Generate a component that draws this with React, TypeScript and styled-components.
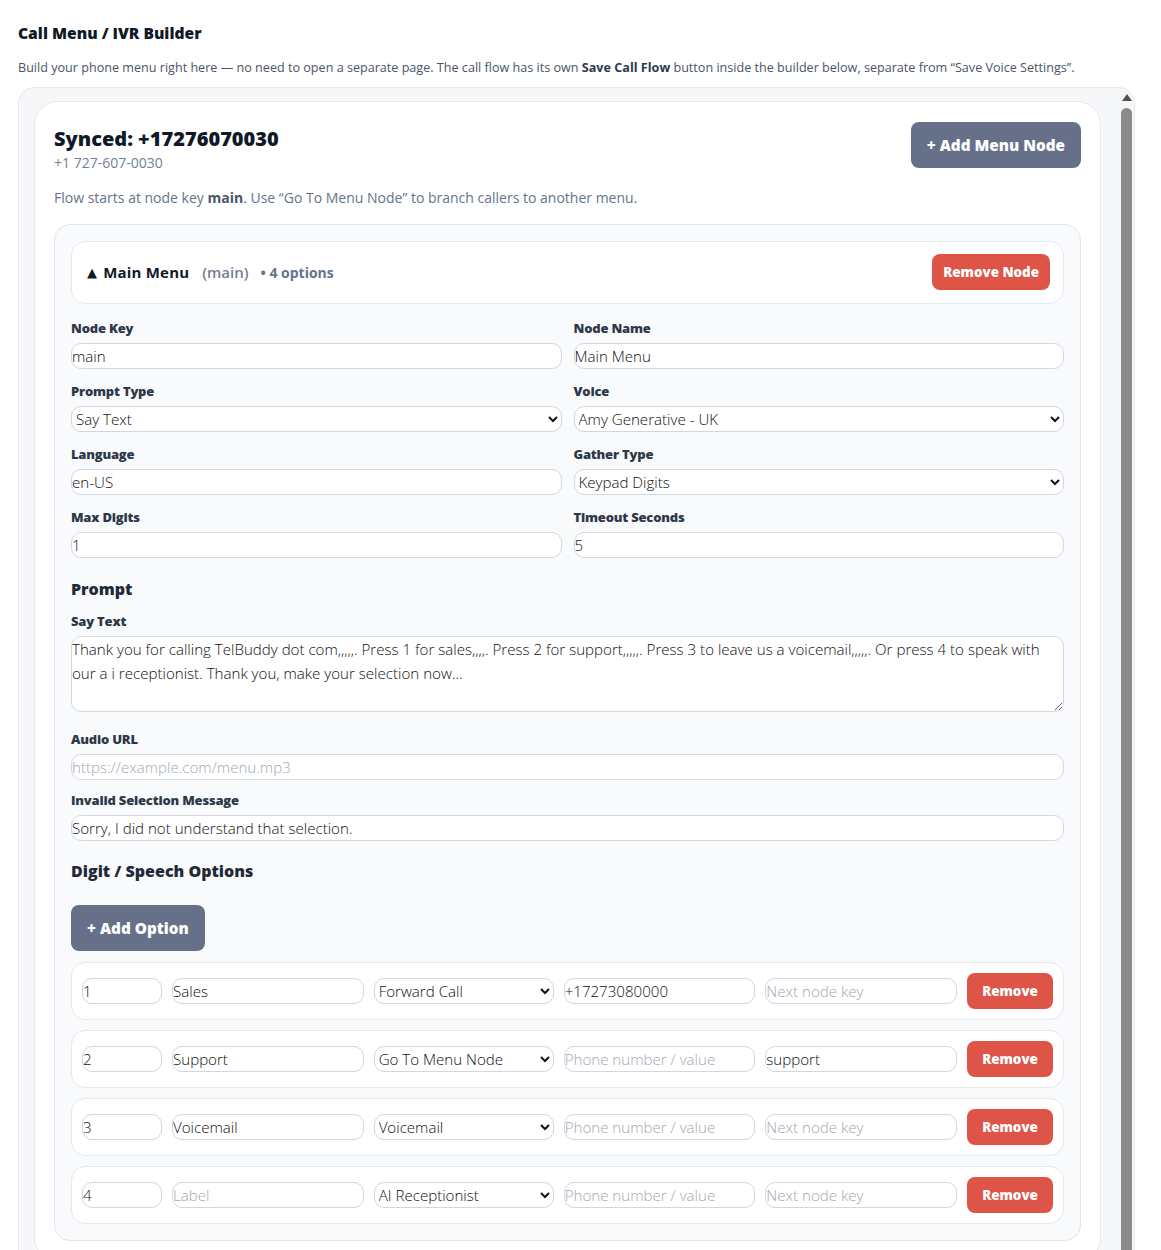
import { FC } from "react";
import styled, { createGlobalStyle } from "styled-components";

const GlobalStyle = createGlobalStyle`
  * { box-sizing: border-box; }
  html, body {
    margin: 0;
    height: 100%;
    overflow: hidden;
    background: #ffffff;
  }
  body {
    font-family: "Open Sans", "Noto Sans", sans-serif;
    color: #1a202c;
  }
`;

const SPage = styled.div`
  padding: 22px 26px 0 18px;
`;

const STitle = styled.h2`
  margin: 0;
  font-size: 15.6px;
  line-height: 22px;
  font-weight: 800;
  color: #111827;
`;

const SIntro = styled.p`
  margin: 15px 0 10px;
  font-size: 12.6px;
  line-height: 18px;
  color: #4a5568;
  b {
    color: #2d3a4f;
    font-weight: 700;
  }
`;

const SScroller = styled.div`
  display: flex;
  height: 1180px;
  background: #f6f7f9;
  border: 1px solid #e6e9ef;
  border-radius: 16px;
  overflow: hidden;
`;

const SScrollArea = styled.div`
  flex: 1;
  min-width: 0;
  overflow: hidden;
  padding: 13px 18px 16px 15px;
`;

const SRail = styled.div`
  flex: none;
  width: 15px;
  display: flex;
  flex-direction: column;
  align-items: center;
  gap: 7px;
  padding-top: 6px;
`;

const SRailArrow = styled.div`
  width: 0;
  height: 0;
  border-left: 5px solid transparent;
  border-right: 5px solid transparent;
  border-bottom: 7px solid #505050;
`;

const SRailThumb = styled.div`
  flex: 1;
  width: 11px;
  border-radius: 6px;
  background: #8b8b8b;
`;

const SCard = styled.div`
  background: #ffffff;
  border: 1px solid #e5e8ee;
  border-radius: 24px;
  padding: 20px 19px 20px 19px;
`;

const SCardHead = styled.div`
  display: flex;
  justify-content: space-between;
  align-items: flex-start;
`;

const SSynced = styled.div`
  margin-top: 5px;
  font-size: 20px;
  line-height: 24px;
  font-weight: 800;
  color: #111827;
`;

const SPhone = styled.div`
  margin-top: 2px;
  font-size: 14px;
  line-height: 20px;
  color: #718096;
`;

const SButton = styled.button<{ $tone?: "slate" | "red"; $size?: "lg" | "sm" }>`
  border: none;
  border-radius: 8px;
  font-family: inherit;
  font-weight: 800;
  color: #ffffff;
  cursor: pointer;
  white-space: nowrap;
  background: ${(p) => (p.$tone === "red" ? "#de5447" : "#667189")};
  height: ${(p) => (p.$size === "sm" ? "36px" : "46px")};
  padding: ${(p) => (p.$size === "sm" ? "0 11px" : "0 16px")};
  font-size: ${(p) => (p.$size === "sm" ? "13.4px" : "15.3px")};
`;

const SFlowNote = styled.p`
  margin: 15px 0 16px;
  font-size: 14px;
  line-height: 20px;
  color: #64748b;
  b {
    color: #4a5568;
    font-weight: 700;
  }
`;

const SNode = styled.div`
  background: #f8fafc;
  border: 1px solid #dfe7f3;
  border-radius: 16px;
  padding: 16px;
`;

const SNodeHead = styled.div`
  display: flex;
  align-items: center;
  gap: 12px;
  background: #ffffff;
  border: 1px solid #e2e9f3;
  border-radius: 14px;
  padding: 12px 13px 13px 15px;
`;

const SNodeName = styled.span`
  display: flex;
  align-items: center;
  font-size: 15px;
  font-weight: 700;
  letter-spacing: 0.2px;
  color: #111827;
`;

const SCaret = styled.span`
  font-family: "DejaVu Sans", sans-serif;
  font-size: 13px;
  margin-right: 6px;
`;

const SNodeKey = styled.span`
  margin-left: 1px;
  font-size: 15px;
  font-weight: 600;
  color: #718096;
`;

const SNodeCount = styled.span`
  font-size: 14px;
  font-weight: 700;
  color: #64748b;
  flex: 1;
`;

const SGrid = styled.div`
  display: grid;
  grid-template-columns: 1fr 1fr;
  column-gap: 12px;
  row-gap: 14px;
  margin-top: 16px;
`;

const SField = styled.label<{ $gap?: number }>`
  display: flex;
  flex-direction: column;
  gap: 7px;
  margin-bottom: ${(p) => p.$gap ?? 0}px;
`;

const SLabel = styled.span`
  font-size: 13px;
  line-height: 16px;
  font-weight: 800;
  color: #2d3748;
  letter-spacing: -0.2px;
`;

const SInput = styled.input`
  width: 100%;
  height: 26px;
  padding: 0;
  border: 1px solid #cfd7e3;
  border-radius: 10px;
  background: #ffffff;
  font-family: "Open Sans", sans-serif;
  font-size: 15.1px;
  font-weight: 300;
  color: #111111;
  &::placeholder {
    color: #a3a8b1;
  }
`;

const SSelect = styled.select`
  width: 100%;
  height: 26px;
  border: 1px solid #cfd7e3;
  border-radius: 10px;
  background: #ffffff;
  font-family: "Open Sans", sans-serif;
  font-size: 15.1px;
  font-weight: 300;
  color: #111111;
`;

const STextArea = styled.textarea`
  display: block;
  width: 100%;
  height: 76px;
  padding: 0;
  border: 1px solid #cfd7e3;
  border-radius: 10px;
  background: #ffffff;
  font-family: "Open Sans", sans-serif;
  font-size: 15.1px;
  font-weight: 300;
  line-height: 24px;
  color: #111111;
  resize: vertical;
`;

const SSection = styled.h3<{ $top: number; $bottom: number }>`
  margin: ${(p) => p.$top}px 0 ${(p) => p.$bottom}px;
  font-size: 16px;
  line-height: 20px;
  font-weight: 800;
  color: #1f2937;
`;

const SOptions = styled.div`
  display: flex;
  flex-direction: column;
  gap: 10px;
  margin-top: 11px;
`;

const SOptionRow = styled.div`
  display: grid;
  grid-template-columns: 80px 1fr 180px 1fr 1fr 86px;
  gap: 10px;
  align-items: center;
  background: #ffffff;
  border: 1px solid #e2e8f0;
  border-radius: 14px;
  padding: 10px;
`;

type Option = {
  digit: string;
  label: string;
  action: string;
  value: string;
  next: string;
};

const options: Option[] = [
  { digit: "1", label: "Sales", action: "Forward Call", value: "+17273080000", next: "" },
  { digit: "2", label: "Support", action: "Go To Menu Node", value: "", next: "support" },
  { digit: "3", label: "Voicemail", action: "Voicemail", value: "", next: "" },
  { digit: "4", label: "", action: "AI Receptionist", value: "", next: "" },
];

const actions = ["Forward Call", "Go To Menu Node", "Voicemail", "AI Receptionist", "Hang Up"];

const sayText =
  "Thank you for calling TelBuddy dot com,,,,,. Press 1 for sales,,,,. Press 2 for support,,,,,. Press 3 to leave us a voicemail,,,,,. Or press 4 to speak with our a i receptionist. Thank you, make your selection now...";

const OptionRow: FC<{ option: Option }> = ({ option }) => (
  <SOptionRow>
    <SInput defaultValue={option.digit} />
    <SInput defaultValue={option.label} placeholder="Label" />
    <SSelect defaultValue={option.action}>
      {actions.map((a) => (
        <option key={a}>{a}</option>
      ))}
    </SSelect>
    <SInput defaultValue={option.value} placeholder="Phone number / value" />
    <SInput defaultValue={option.next} placeholder="Next node key" />
    <SButton $tone="red" $size="sm">
      Remove
    </SButton>
  </SOptionRow>
);

export default function App() {
  return (
    <>
      <GlobalStyle />
      <SPage>
        <STitle>Call Menu / IVR Builder</STitle>
        <SIntro>
          Build your phone menu right here — no need to open a separate page. The call flow has its own{" "}
          <b>Save Call Flow</b> button inside the builder below, separate from “Save Voice Settings”.
        </SIntro>
        <SScroller>
          <SScrollArea>
            <SCard>
              <SCardHead>
                <div>
                  <SSynced>Synced: +17276070030</SSynced>
                  <SPhone>+1 727-607-0030</SPhone>
                </div>
                <SButton>+ Add Menu Node</SButton>
              </SCardHead>
              <SFlowNote>
                Flow starts at node key <b>main</b>. Use “Go To Menu Node” to branch callers to another menu.
              </SFlowNote>
              <SNode>
                <SNodeHead>
                  <SNodeName>
                    <SCaret>▲</SCaret>Main Menu
                  </SNodeName>
                  <SNodeKey>(main)</SNodeKey>
                  <SNodeCount>• 4 options</SNodeCount>
                  <SButton $tone="red" $size="sm">
                    Remove Node
                  </SButton>
                </SNodeHead>

                <SGrid>
                  <SField>
                    <SLabel>Node Key</SLabel>
                    <SInput defaultValue="main" />
                  </SField>
                  <SField>
                    <SLabel>Node Name</SLabel>
                    <SInput defaultValue="Main Menu" />
                  </SField>
                  <SField>
                    <SLabel>Prompt Type</SLabel>
                    <SSelect defaultValue="Say Text">
                      <option>Say Text</option>
                      <option>Play Audio</option>
                    </SSelect>
                  </SField>
                  <SField>
                    <SLabel>Voice</SLabel>
                    <SSelect defaultValue="Amy Generative - UK">
                      <option>Amy Generative - UK</option>
                      <option>Joanna Generative - US</option>
                    </SSelect>
                  </SField>
                  <SField>
                    <SLabel>Language</SLabel>
                    <SInput defaultValue="en-US" />
                  </SField>
                  <SField>
                    <SLabel>Gather Type</SLabel>
                    <SSelect defaultValue="Keypad Digits">
                      <option>Keypad Digits</option>
                      <option>Speech</option>
                    </SSelect>
                  </SField>
                  <SField>
                    <SLabel>Max Digits</SLabel>
                    <SInput defaultValue="1" />
                  </SField>
                  <SField>
                    <SLabel>Timeout Seconds</SLabel>
                    <SInput defaultValue="5" />
                  </SField>
                </SGrid>

                <SSection $top={21} $bottom={14}>
                  Prompt
                </SSection>
                <SField $gap={19}>
                  <SLabel>Say Text</SLabel>
                  <STextArea defaultValue={sayText} />
                </SField>
                <SField $gap={12}>
                  <SLabel>Audio URL</SLabel>
                  <SInput placeholder="https://example.com/menu.mp3" />
                </SField>
                <SField>
                  <SLabel>Invalid Selection Message</SLabel>
                  <SInput defaultValue="Sorry, I did not understand that selection." />
                </SField>

                <SSection $top={20} $bottom={24}>
                  Digit / Speech Options
                </SSection>
                <SButton>+ Add Option</SButton>
                <SOptions>
                  {options.map((o) => (
                    <OptionRow key={o.digit} option={o} />
                  ))}
                </SOptions>
              </SNode>
            </SCard>
          </SScrollArea>
          <SRail>
            <SRailArrow />
            <SRailThumb />
          </SRail>
        </SScroller>
      </SPage>
    </>
  );
}
